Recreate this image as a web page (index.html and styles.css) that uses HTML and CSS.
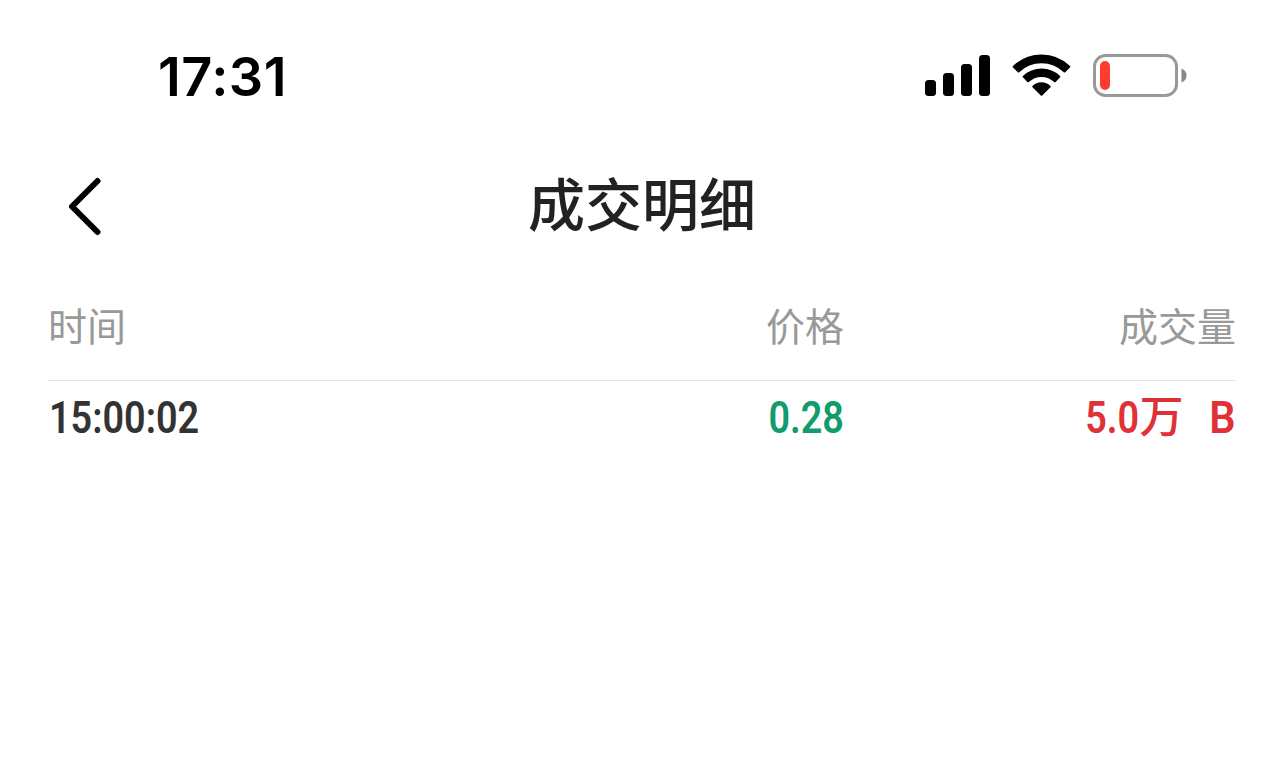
FILE: index.html
```html
<!DOCTYPE html>
<html lang="zh-CN">
<head>
    <meta charset="utf-8">
    <meta name="viewport" content="width=device-width, initial-scale=1">
    <title>成交明细</title>
    <link rel="stylesheet" href="styles.css">
</head>
<body>
    <header class="status-bar">
        <span class="clock">17:31</span>
        <div class="status-icons">
            <svg class="signal" width="66" height="42" viewBox="0 0 66 42">
                <rect x="0" y="26" width="11" height="16" rx="3.500"/>
                <rect x="18" y="19" width="11" height="23" rx="3.500"/>
                <rect x="36" y="10" width="11" height="32" rx="3.500"/>
                <rect x="54" y="1" width="11" height="41" rx="3.500"/>
            </svg>
            <svg class="wifi" width="58" height="42" viewBox="0.5 -0.2 58 42">
                <path d="M1.200 12.500A40 40 0 0 1 56.800 12.500L52 17.300A33 33 0 0 0 6 17.300Z"/>
                <path d="M11.100 22.400A25.800 25.800 0 0 1 46.900 22.400L42.400 27.100A19.300 19.300 0 0 0 15.600 27.100Z"/>
                <path d="M20.700 32.400A12 12 0 0 1 37.300 32.400L29 40.600Z"/>
            </svg>
            <svg class="battery" width="94" height="44" viewBox="0 0 94 44">
                <rect class="battery-case" x="1.500" y="1.500" width="82" height="40" rx="11"/>
                <rect class="battery-level" x="7" y="7" width="10" height="29" rx="5"/>
                <path class="battery-tip" d="M88.500 14.500Q93.500 16.500 93.500 21.500T88.500 28.500Z"/>
            </svg>
        </div>
    </header>
    <nav class="nav-bar">
        <a class="back" href="#" aria-label="返回">
            <svg width="34" height="60" viewBox="0 0 34 60">
                <path d="M29.500 4L4 29.500L29.500 55"/>
            </svg>
        </a>
        <h1>成交明细</h1>
    </nav>
    <main class="trades">
        <div class="row head">
            <span>时间</span>
            <span>价格</span>
            <span>成交量</span>
        </div>
        <div class="row trade">
            <span class="time"><b>15:00:02</b></span>
            <span class="price"><b>0.28</b></span>
            <span class="volume"><b>5.0</b><i>万</i><b class="side">B</b></span>
        </div>
    </main>
</body>
</html>
```
FILE: styles.css
```css
body {
    margin: 0;
    background-color: #fff;
    font-family: "Noto Sans CJK SC", sans-serif;
}
.status-bar {
    display: flex;
    justify-content: space-between;
    height: 152px;
    box-sizing: border-box;
    padding: 54px 97px 0 158px;
}
.clock {
    font: 600 54px/46px Inter, sans-serif;
    letter-spacing: 0.5px;
}
.status-icons {
    display: flex;
    gap: 22px;
}
.wifi {
    overflow: visible;
    stroke: #000;
    stroke-width: 2;
    stroke-linejoin: round;
}
.battery-case {
    fill: none;
    stroke: #999;
    stroke-width: 3;
}
.battery-level {
    fill: #ff3b30;
}
.battery-tip {
    fill: #888;
}
.nav-bar {
    display: grid;
    grid-template-columns: 100px 1fr 100px;
    align-items: center;
    height: 100px;
    padding: 0 67px 8px;
}
.back svg {
    display: block;
    margin: 9px 0 0 1px;
    fill: none;
    stroke: #000;
    stroke-width: 6;
    stroke-linecap: round;
    stroke-linejoin: round;
}
h1 {
    margin: 0;
    text-align: center;
    font-size: 57px;
    font-weight: 500;
    line-height: 98px;
    padding-bottom: 2px;
    color: #222;
}
.trades {
    padding: 20px 48px 0;
}
.row {
    display: grid;
    grid-template-columns: 400px 396px 1fr;
}
.row > :not(:first-child) {
    text-align: right;
}
.head {
    height: 100px;
    border-bottom: 1px solid #e5e5e5;
    font-size: 39px;
    font-weight: 400;
    line-height: 89px;
    color: #999;
}
.trade {
    padding-top: 5px;
    font-size: 44px;
    line-height: 56px;
    color: #333;
}
/* narrow figures */
.trade b {
    display: inline-block;
    font-family: Roboto, sans-serif;
    font-size: 45px;
    font-weight: 600;
    transform: scaleX(0.84);
    transform-origin: right;
}
.trade .time b {
    transform-origin: left;
    margin-left: 1px;
}
.price {
    color: #129b6c;
}
.volume {
    color: #e03038;
}
.volume i {
    font-style: normal;
    font-weight: 500;
}
.trade .side {
    margin-left: 24px;
    transform: scaleX(0.92);
}
```
